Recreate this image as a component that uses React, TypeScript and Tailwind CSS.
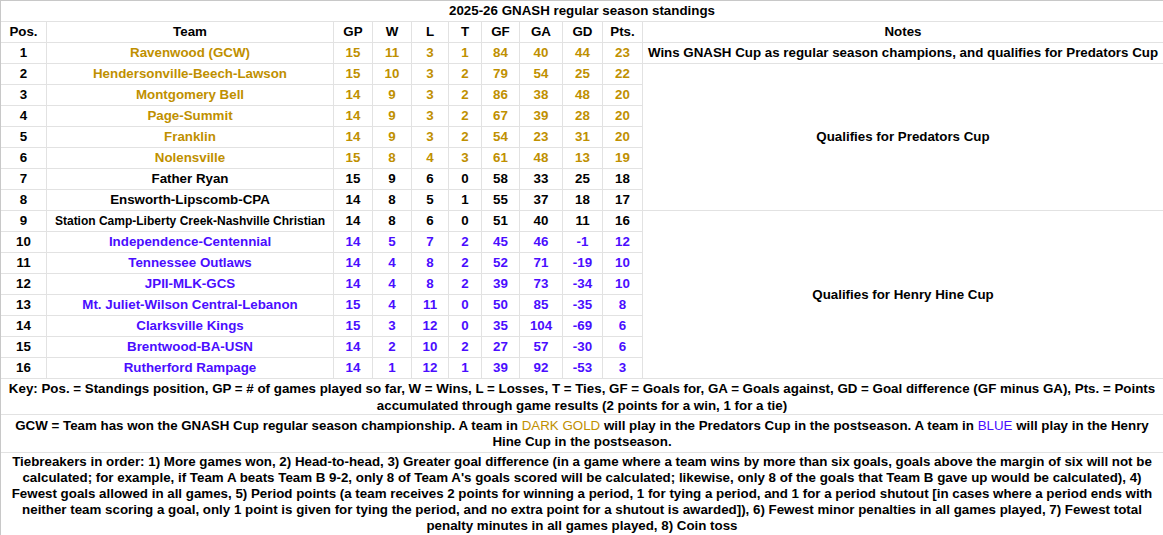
import React from "react";

type Row = {
  pos: number;
  team: string;
  gp: number;
  w: number;
  l: number;
  t: number;
  gf: number;
  ga: number;
  gd: number;
  pts: number;
  c: "gold" | "black" | "blue";
  small?: boolean;
};

const rows: Row[] = [
  { pos: 1, team: "Ravenwood (GCW)", gp: 15, w: 11, l: 3, t: 1, gf: 84, ga: 40, gd: 44, pts: 23, c: "gold" },
  { pos: 2, team: "Hendersonville-Beech-Lawson", gp: 15, w: 10, l: 3, t: 2, gf: 79, ga: 54, gd: 25, pts: 22, c: "gold" },
  { pos: 3, team: "Montgomery Bell", gp: 14, w: 9, l: 3, t: 2, gf: 86, ga: 38, gd: 48, pts: 20, c: "gold" },
  { pos: 4, team: "Page-Summit", gp: 14, w: 9, l: 3, t: 2, gf: 67, ga: 39, gd: 28, pts: 20, c: "gold" },
  { pos: 5, team: "Franklin", gp: 14, w: 9, l: 3, t: 2, gf: 54, ga: 23, gd: 31, pts: 20, c: "gold" },
  { pos: 6, team: "Nolensville", gp: 15, w: 8, l: 4, t: 3, gf: 61, ga: 48, gd: 13, pts: 19, c: "gold" },
  { pos: 7, team: "Father Ryan", gp: 15, w: 9, l: 6, t: 0, gf: 58, ga: 33, gd: 25, pts: 18, c: "black" },
  { pos: 8, team: "Ensworth-Lipscomb-CPA", gp: 14, w: 8, l: 5, t: 1, gf: 55, ga: 37, gd: 18, pts: 17, c: "black" },
  { pos: 9, team: "Station Camp-Liberty Creek-Nashville Christian", gp: 14, w: 8, l: 6, t: 0, gf: 51, ga: 40, gd: 11, pts: 16, c: "black", small: true },
  { pos: 10, team: "Independence-Centennial", gp: 14, w: 5, l: 7, t: 2, gf: 45, ga: 46, gd: -1, pts: 12, c: "blue" },
  { pos: 11, team: "Tennessee Outlaws", gp: 14, w: 4, l: 8, t: 2, gf: 52, ga: 71, gd: -19, pts: 10, c: "blue" },
  { pos: 12, team: "JPII-MLK-GCS", gp: 14, w: 4, l: 8, t: 2, gf: 39, ga: 73, gd: -34, pts: 10, c: "blue" },
  { pos: 13, team: "Mt. Juliet-Wilson Central-Lebanon", gp: 15, w: 4, l: 11, t: 0, gf: 50, ga: 85, gd: -35, pts: 8, c: "blue" },
  { pos: 14, team: "Clarksville Kings", gp: 15, w: 3, l: 12, t: 0, gf: 35, ga: 104, gd: -69, pts: 6, c: "blue" },
  { pos: 15, team: "Brentwood-BA-USN", gp: 14, w: 2, l: 10, t: 2, gf: 27, ga: 57, gd: -30, pts: 6, c: "blue" },
  { pos: 16, team: "Rutherford Rampage", gp: 14, w: 1, l: 12, t: 1, gf: 39, ga: 92, gd: -53, pts: 3, c: "blue" },
];

const colorClass = {
  gold: "text-[#bf9000]",
  black: "text-black",
  blue: "text-[#4a0dff]",
};

const cell = "bg-white flex items-center justify-center whitespace-nowrap";

export default function App() {
  return (
    <div
      className="w-[1163px] h-[535px] overflow-hidden bg-white"
      style={{ fontFamily: '"Liberation Sans", Arial, sans-serif' }}
    >
      <div className="grid grid-cols-[45px_286px_38px_38px_36px_32px_37px_42px_39px_39px_1fr] grid-rows-[repeat(18,20px)_35px_37px_82px] gap-px bg-[#e2e2e2] border-t border-l border-[#c8c8c8] text-[13.33px] font-bold text-black leading-none">
        <div className={`${cell} col-span-11`}>2025-26 GNASH regular season standings</div>

        {["Pos.", "Team", "GP", "W", "L", "T", "GF", "GA", "GD", "Pts.", "Notes"].map((h) => (
          <div key={h} className={cell}>
            {h}
          </div>
        ))}

        {rows.map((r, i) => {
          const cc = colorClass[r.c];
          return (
            <React.Fragment key={r.pos}>
              <div className={`${cell} text-black`}>{r.pos}</div>
              <div className={`${cell} ${cc} ${r.small ? "text-[12px]" : ""}`}>{r.team}</div>
              <div className={`${cell} ${cc}`}>{r.gp}</div>
              <div className={`${cell} ${cc}`}>{r.w}</div>
              <div className={`${cell} ${cc}`}>{r.l}</div>
              <div className={`${cell} ${cc}`}>{r.t}</div>
              <div className={`${cell} ${cc}`}>{r.gf}</div>
              <div className={`${cell} ${cc}`}>{r.ga}</div>
              <div className={`${cell} ${cc}`}>{r.gd}</div>
              <div className={`${cell} ${cc}`}>{r.pts}</div>
              {i === 0 && (
                <div className={cell}>
                  Wins GNASH Cup as regular season champions, and qualifies for Predators Cup
                </div>
              )}
              {i === 1 && <div className={`${cell} row-span-7`}>Qualifies for Predators Cup</div>}
              {i === 8 && <div className={`${cell} row-span-8`}>Qualifies for Henry Hine Cup</div>}
            </React.Fragment>
          );
        })}

        <div className="col-span-11 bg-white flex items-center justify-center text-center px-[3px] leading-[17px]">
          <p className="leading-[17px]">
            Key: Pos. = Standings position, GP = # of games played so far, W = Wins, L = Losses, T = Ties, GF = Goals
            for, GA = Goals against, GD = Goal difference (GF minus GA), Pts. = Points accumulated through game results
            (2 points for a win, 1 for a tie)
          </p>
        </div>
        <div className="col-span-11 bg-white flex items-center justify-center text-center px-[3px] leading-[16px]">
          <p className="leading-[16px]">
            GCW = Team has won the GNASH Cup regular season championship. A team in{" "}
            <span className="font-normal text-[#bf9000]">DARK GOLD</span> will play in the Predators Cup in the
            postseason. A team in <span className="font-normal text-[#4a0dff]">BLUE</span> will play in the Henry Hine
            Cup in the postseason.
          </p>
        </div>
        <div className="col-span-11 bg-white flex items-center justify-center text-center px-[3px] leading-[16px]">
          <p className="leading-[16px]">
            Tiebreakers in order: 1) More games won, 2) Head-to-head, 3) Greater goal difference (in a game where a team
            wins by more than six goals, goals above the margin of six will not be calculated; for example, if Team A
            beats Team B 9-2, only 8 of Team A's goals scored will be calculated; likewise, only 8 of the goals that
            Team B gave up would be calculated), 4) Fewest goals allowed in all games, 5) Period points (a team receives
            2 points for winning a period, 1 for tying a period, and 1 for a period shutout [in cases where a period
            ends with neither team scoring a goal, only 1 point is given for tying the period, and no extra point for a
            shutout is awarded]), 6) Fewest minor penalties in all games played, 7) Fewest total penalty minutes in all
            games played, 8) Coin toss
          </p>
        </div>
      </div>
    </div>
  );
}
